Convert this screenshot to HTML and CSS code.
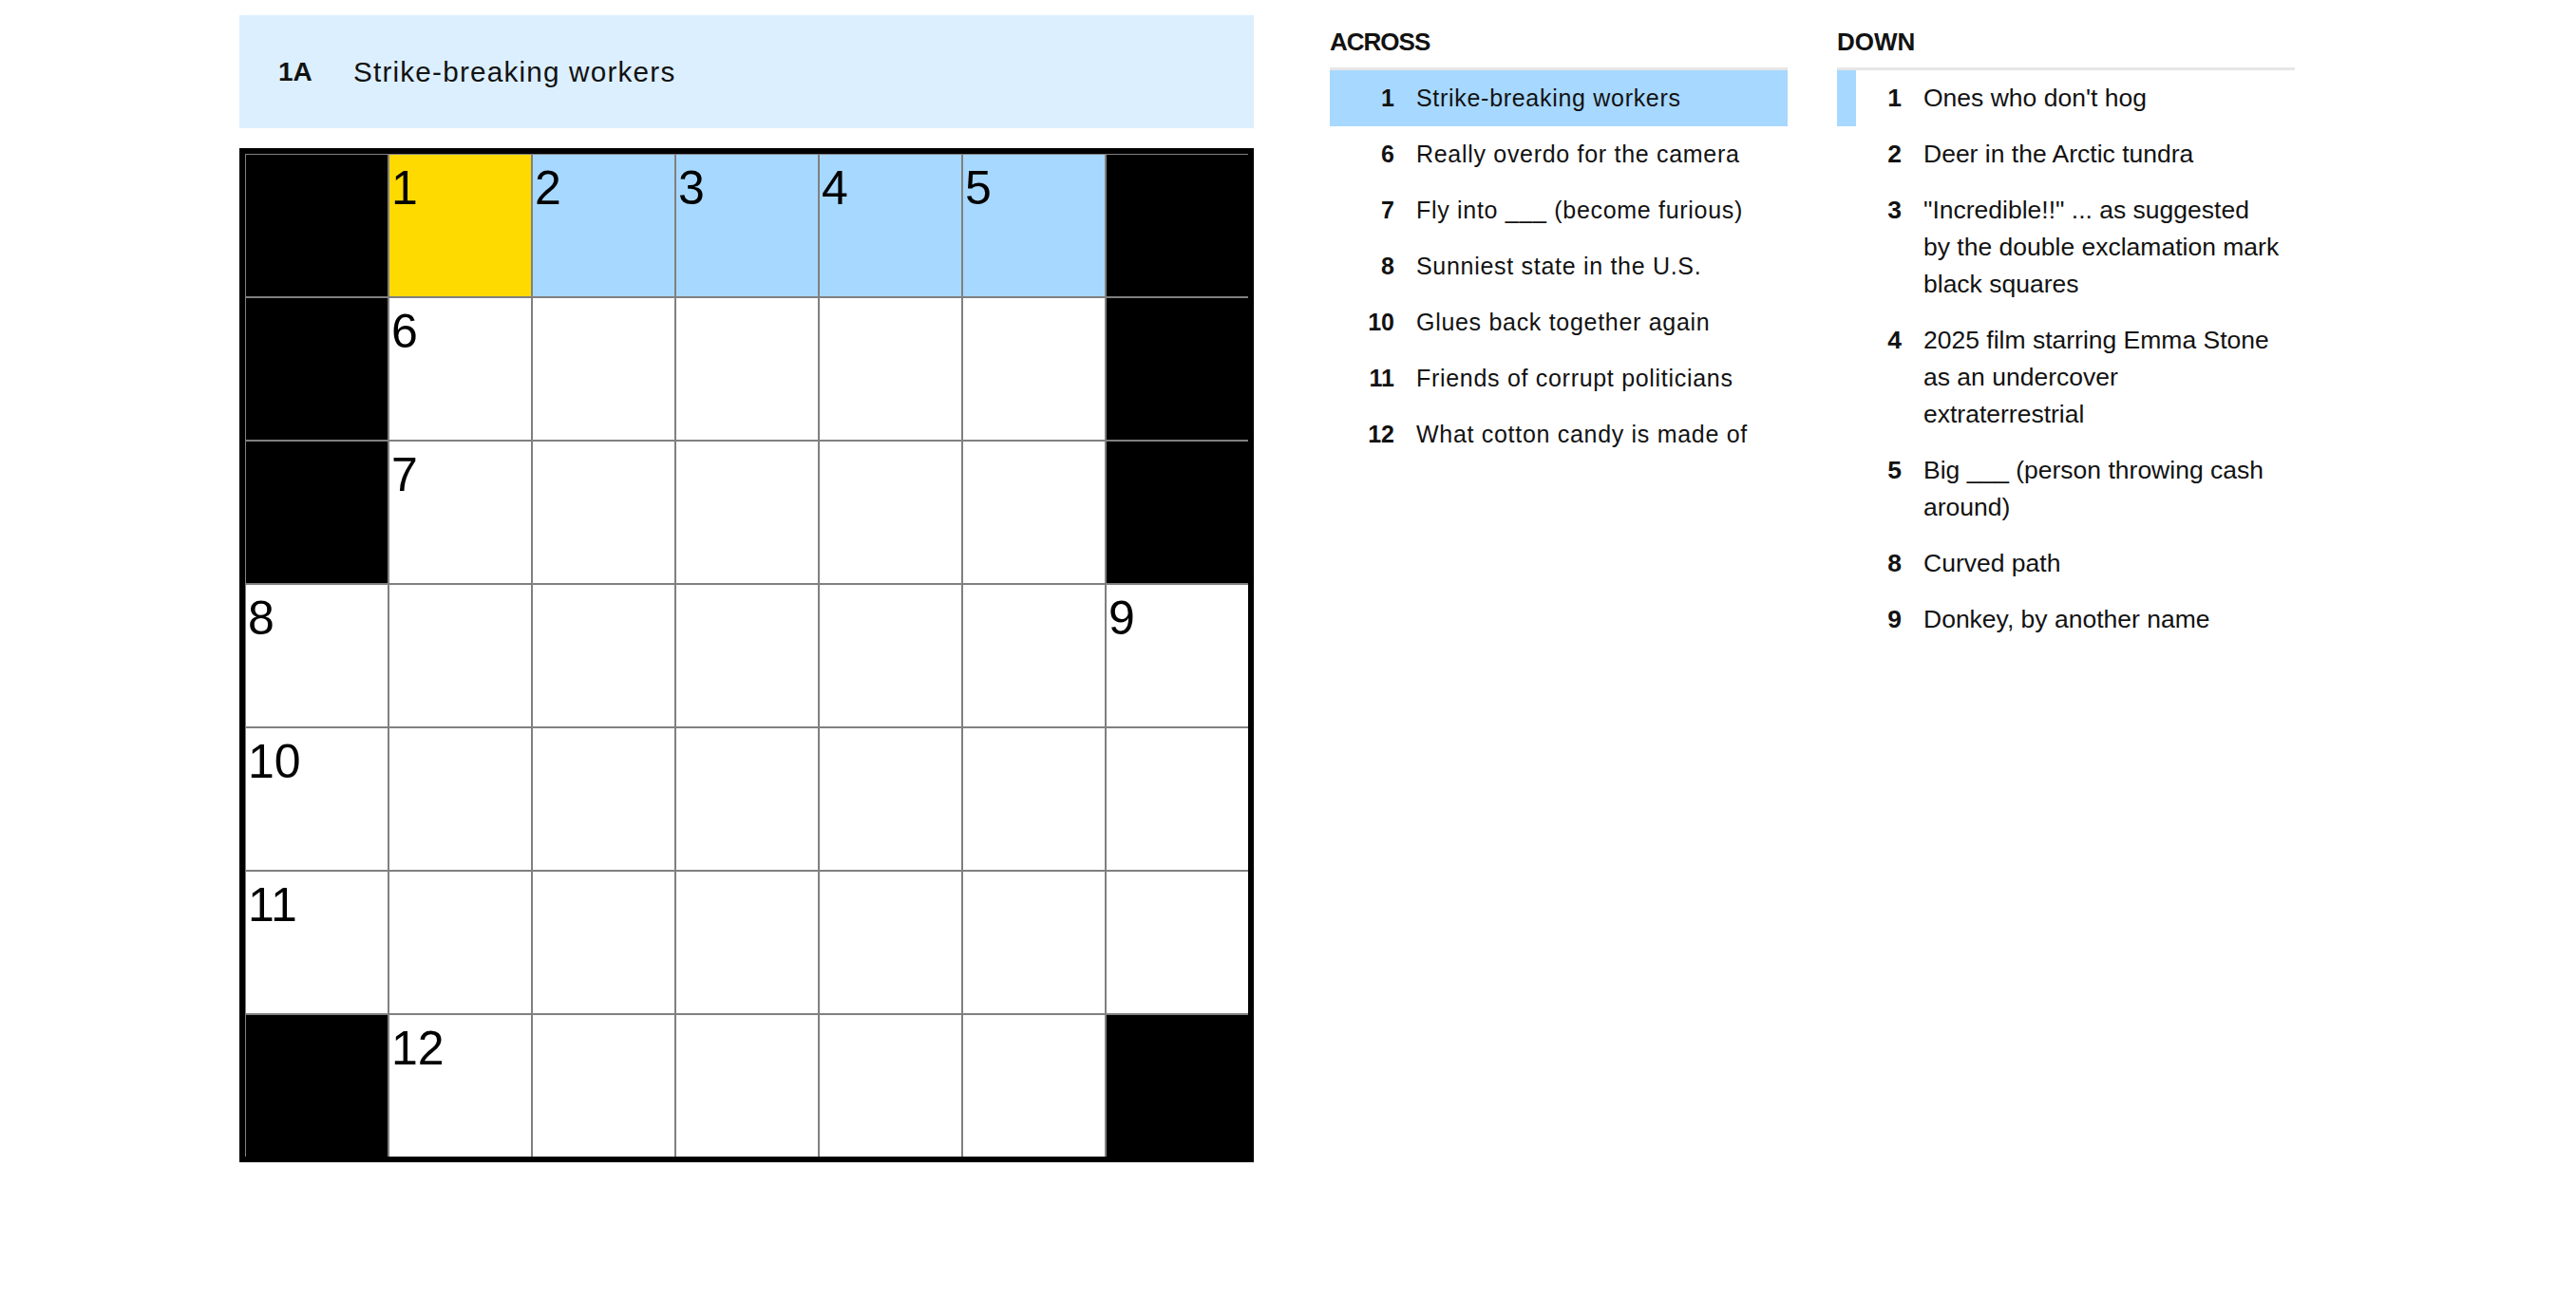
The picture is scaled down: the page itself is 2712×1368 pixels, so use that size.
FILE: index.html
```html
<!DOCTYPE html>
<html lang="en">
<head>
    <meta charset="UTF-8">
    <meta name="viewport" content="width=device-width, initial-scale=1.0">
    <title>The Mini Crossword</title>
    <link rel="stylesheet" href="styles.css">
</head>
<body>
    <div class="page">
        <div class="puzzle">
            <div class="clue-bar">
                <span class="clue-label">1A</span>
                <span class="clue-text">Strike-breaking workers</span>
            </div>
            <div class="board" id="board">
                <!-- row 1 -->
                <div class="cell block"></div>
                <div class="cell current"><span class="label">1</span></div>
                <div class="cell word"><span class="label">2</span></div>
                <div class="cell word"><span class="label">3</span></div>
                <div class="cell word"><span class="label">4</span></div>
                <div class="cell word"><span class="label">5</span></div>
                <div class="cell block"></div>
                <!-- row 2 -->
                <div class="cell block"></div>
                <div class="cell"><span class="label">6</span></div>
                <div class="cell"></div>
                <div class="cell"></div>
                <div class="cell"></div>
                <div class="cell"></div>
                <div class="cell block"></div>
                <!-- row 3 -->
                <div class="cell block"></div>
                <div class="cell"><span class="label">7</span></div>
                <div class="cell"></div>
                <div class="cell"></div>
                <div class="cell"></div>
                <div class="cell"></div>
                <div class="cell block"></div>
                <!-- row 4 -->
                <div class="cell"><span class="label">8</span></div>
                <div class="cell"></div>
                <div class="cell"></div>
                <div class="cell"></div>
                <div class="cell"></div>
                <div class="cell"></div>
                <div class="cell"><span class="label">9</span></div>
                <!-- row 5 -->
                <div class="cell"><span class="label">10</span></div>
                <div class="cell"></div>
                <div class="cell"></div>
                <div class="cell"></div>
                <div class="cell"></div>
                <div class="cell"></div>
                <div class="cell"></div>
                <!-- row 6 -->
                <div class="cell"><span class="label">11</span></div>
                <div class="cell"></div>
                <div class="cell"></div>
                <div class="cell"></div>
                <div class="cell"></div>
                <div class="cell"></div>
                <div class="cell"></div>
                <!-- row 7 -->
                <div class="cell block"></div>
                <div class="cell"><span class="label">12</span></div>
                <div class="cell"></div>
                <div class="cell"></div>
                <div class="cell"></div>
                <div class="cell"></div>
                <div class="cell block"></div>
            </div>
        </div>

        <div class="clues">
            <div class="clue-list across">
                <h3>ACROSS</h3>
                <ol>
                    <li class="selected"><span class="num">1</span><span class="text">Strike-breaking workers</span></li>
                    <li><span class="num">6</span><span class="text">Really overdo for the camera</span></li>
                    <li><span class="num">7</span><span class="text">Fly into ___ (become furious)</span></li>
                    <li><span class="num">8</span><span class="text">Sunniest state in the U.S.</span></li>
                    <li><span class="num">10</span><span class="text">Glues back together again</span></li>
                    <li><span class="num">11</span><span class="text">Friends of corrupt politicians</span></li>
                    <li><span class="num">12</span><span class="text">What cotton candy is made of</span></li>
                </ol>
            </div>
            <div class="clue-list down">
                <h3>DOWN</h3>
                <ol>
                    <li class="related"><span class="num">1</span><span class="text">Ones who don't hog</span></li>
                    <li><span class="num">2</span><span class="text">Deer in the Arctic tundra</span></li>
                    <li><span class="num">3</span><span class="text">"Incredible!!" ... as suggested by the double exclamation mark black squares</span></li>
                    <li><span class="num">4</span><span class="text">2025 film starring Emma Stone as an undercover extraterrestrial</span></li>
                    <li><span class="num">5</span><span class="text">Big ___ (person throwing cash around)</span></li>
                    <li><span class="num">8</span><span class="text">Curved path</span></li>
                    <li><span class="num">9</span><span class="text">Donkey, by another name</span></li>
                </ol>
            </div>
        </div>
    </div>
</body>
</html>
```

FILE: styles.css
```css
body {
    margin: 0;
    background: #fff;
    color: #121212;
    font-family: "Liberation Sans", Arial, sans-serif;
}

.page {
    display: flex;
    align-items: flex-start;
    padding: 16px 0 0 252px;
}

/* current clue strip above the board */
.clue-bar {
    display: flex;
    align-items: center;
    height: 119px;
    padding-left: 41px;
    margin-bottom: 21px;
    background-color: #dcefff;
}
.clue-label {
    width: 79px;
    font-size: 28px;
    font-weight: bold;
}
.clue-text {
    font-size: 29.7px;
    letter-spacing: 1.2px;
}

/* board */
.board {
    display: grid;
    grid-template-columns: repeat(7, 149px);
    grid-auto-rows: 149px;
    gap: 2px;
    padding: 1px 0 0 1px;
    width: fit-content;
    background-color: #808080;
    border: 6px solid #000;
}
.cell {
    background-color: #fff;
    padding: 10px 0 0 2px;
    font-size: 50px;
    line-height: 1;
    color: #000;
}
.cell.block {
    background-color: #000;
}
.cell.word {
    background-color: #a7d8ff;
}
.cell.current {
    background-color: #ffda00;
}

/* clue lists */
.clues {
    display: flex;
    gap: 52px;
    margin-left: 80px;
}
.clue-list {
    width: 482px;
    padding-top: 13px;
}
.clue-list h3 {
    margin: 0 0 12px;
    font-size: 26px;
    line-height: 30px;
    font-weight: bold;
}
.across h3 {
    letter-spacing: -1px;
}
.clue-list ol {
    list-style: none;
    margin: 0;
    padding: 0;
    border-top: 3px solid #e6e6e6;
}
.clue-list li {
    display: flex;
    border-left: 20px solid transparent;
    padding: 10px 15px 10px 0;
    line-height: 39px;
}
.clue-list .num {
    flex-shrink: 0;
    width: 48px;
    margin-right: 23px;
    text-align: right;
    font-weight: bold;
}
.clue-list .text {
    flex: 1;
}
.across li {
    font-size: 25px;
    letter-spacing: 0.7px;
}
.across .num {
    letter-spacing: 0;
}
.down li {
    font-size: 26.5px;
}
.across li.selected {
    background-color: #a7d8ff;
}
.down li.related {
    border-left-color: #a7d8ff;
}
```
